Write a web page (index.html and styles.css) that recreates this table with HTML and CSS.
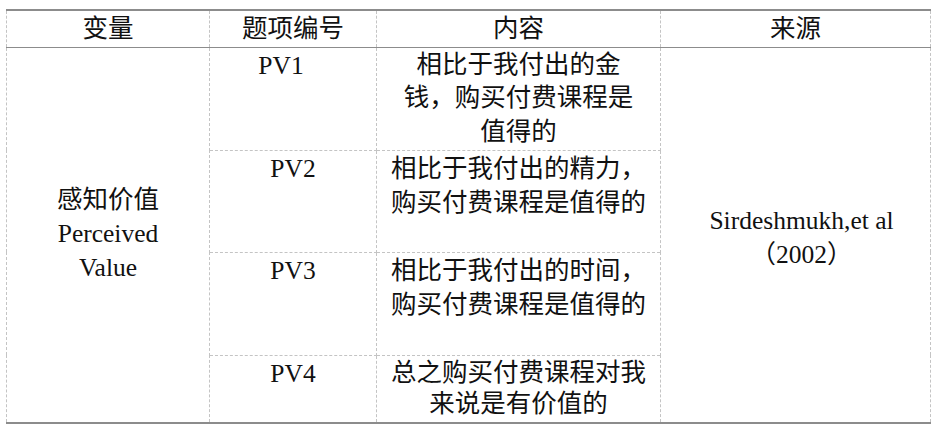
FILE: index.html
```html
<!DOCTYPE html>
<html lang="zh-CN">
<head>
<meta charset="utf-8">
<title>感知价值量表</title>
<link rel="stylesheet" href="styles.css">
</head>
<body>
<div class="page">
  <div class="caption-clip"><div class="caption">表3-2 感知价值测量量表</div></div>
  <table class="scale">
    <colgroup>
      <col class="c1"><col class="c2"><col class="c3"><col class="c4">
    </colgroup>
    <thead>
      <tr class="head">
        <th>变量</th>
        <th>题项编号</th>
        <th>内容</th>
        <th>来源</th>
      </tr>
    </thead>
    <tbody>
      <tr class="r1">
        <td rowspan="4" class="var">感知价值<br>Perceived<br>Value</td>
        <td class="code shift">PV1</td>
        <td class="content first">相比于我付出的金<br>钱，购买付费课程是<br>值得的</td>
        <td rowspan="4" class="src">Sirdeshmukh,et al<br>（2002）</td>
      </tr>
      <tr class="r2">
        <td class="code">PV2</td>
        <td class="content">相比于我付出的精力，<br>购买付费课程是值得的</td>
      </tr>
      <tr class="r3">
        <td class="code">PV3</td>
        <td class="content">相比于我付出的时间，<br>购买付费课程是值得的</td>
      </tr>
      <tr class="r4">
        <td class="code">PV4</td>
        <td class="content tight">总之购买付费课程对我<br>来说是有价值的</td>
      </tr>
    </tbody>
  </table>
</div>
</body>
</html>
```

FILE: styles.css
```css
html, body {
  margin: 0;
  padding: 0;
  background: #ffffff;
}

body {
  font-family: "Liberation Serif", "Noto Sans CJK SC", serif;
  color: #111111;
}

.page {
  width: 936px;
  height: 427px;
  overflow: hidden;
}

.caption-clip {
  height: 9px;
  overflow: hidden;
  display: flex;
  justify-content: center;
}

.caption {
  font-family: "Noto Sans CJK SC", sans-serif;
  font-size: 25px;
  line-height: 25px;
  margin-top: -27px;
  color: #e8132b;
  letter-spacing: 1px;
}

.scale {
  margin-left: 6px;
  border-collapse: collapse;
  table-layout: fixed;
  width: 924px;
  font-size: 25.5px;
  line-height: 34px;
}

.c1 { width: 203px; }
.c2 { width: 167px; }
.c3 { width: 284px; }
.c4 { width: 270px; }

.scale th,
.scale td {
  border: 1px dashed #c4c4c4;
  padding: 0;
  text-align: center;
  font-family: "Liberation Serif", "Noto Sans CJK SC", serif;
  font-weight: normal;
}

.scale thead th {
  border-top: 2px solid #8c8c8c;
  border-bottom: 1px solid #8c8c8c;
  vertical-align: middle;
  padding-top: 0;
}

.head { height: 37px; }
.r1 { height: 103px; }
.r2 { height: 102px; }
.r3 { height: 103px; }
.r4 { height: 68px; }

.scale tbody td {
  vertical-align: top;
  padding-top: 1px;
}

.scale tbody td.first {
  padding-top: 0;
  line-height: 33.5px;
}

.scale tbody tr.r4 td,
.scale td.var,
.scale td.src {
  border-bottom: 2px solid #8c8c8c;
}

.scale td.var {
  vertical-align: middle;
  padding-top: 0;
  padding-bottom: 2px;
}

.scale td.src {
  vertical-align: middle;
  padding-left: 12px;
  padding-top: 7px;
}

.scale td.shift {
  padding-right: 24px;
}

.scale td.content.tight {
  line-height: 31px;
}
```
